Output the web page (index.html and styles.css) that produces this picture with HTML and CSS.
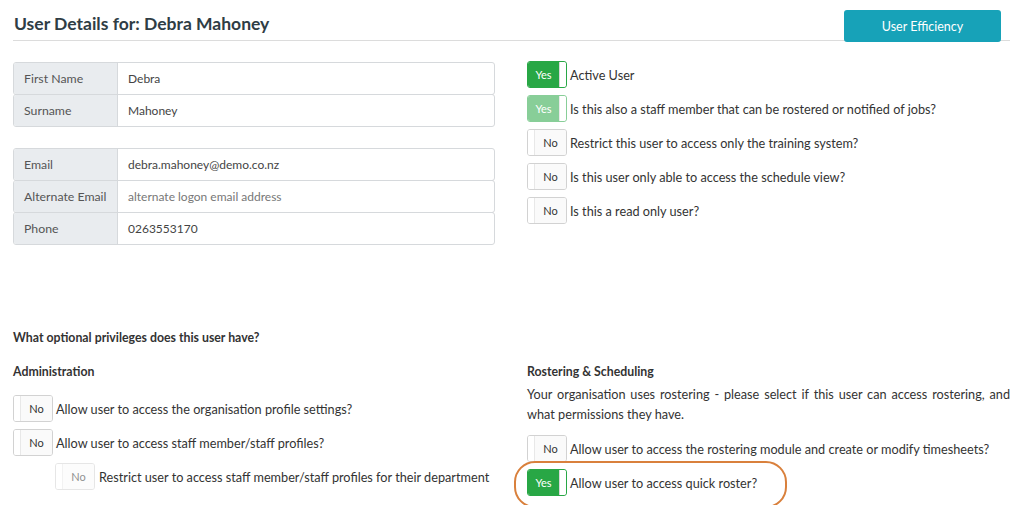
FILE: index.html
```html
<!DOCTYPE html>
<html>
<head>
<meta charset="utf-8">
<link rel="stylesheet" href="styles.css">
</head>
<body>
<div class="page">
  <div class="header">
    <h1 class="title">User Details for: Debra Mahoney</h1>
    <button class="btn-eff">User Efficiency</button>
  </div>

  <div class="top">
    <div class="col-left">
      <div class="group">
        <div class="row"><div class="lbl">First Name</div><div class="val">Debra</div></div>
        <div class="row"><div class="lbl">Surname</div><div class="val">Mahoney</div></div>
      </div>
      <div class="group g2">
        <div class="row"><div class="lbl">Email</div><div class="val">debra.mahoney@demo.co.nz</div></div>
        <div class="row"><div class="lbl">Alternate Email</div><div class="val ph">alternate logon email address</div></div>
        <div class="row"><div class="lbl">Phone</div><div class="val">0263553170</div></div>
      </div>
    </div>
    <div class="col-right">
      <div class="opt"><span class="tg yes"><span class="on">Yes</span><span class="knob"></span></span><span class="otxt">Active User</span></div>
      <div class="opt"><span class="tg yes dis"><span class="on">Yes</span><span class="knob"></span></span><span class="otxt">Is this also a staff member that can be rostered or notified of jobs?</span></div>
      <div class="opt"><span class="tg no"><span class="knob"></span><span class="off">No</span></span><span class="otxt">Restrict this user to access only the training system?</span></div>
      <div class="opt"><span class="tg no"><span class="knob"></span><span class="off">No</span></span><span class="otxt">Is this user only able to access the schedule view?</span></div>
      <div class="opt"><span class="tg no"><span class="knob"></span><span class="off">No</span></span><span class="otxt">Is this a read only user?</span></div>
    </div>
  </div>

  <div class="priv">What optional privileges does this user have?</div>

  <div class="bottom">
    <div class="col-left">
      <div class="sub">Administration</div>
      <div class="opts-admin">
        <div class="opt"><span class="tg no"><span class="knob"></span><span class="off">No</span></span><span class="otxt">Allow user to access the organisation profile settings?</span></div>
        <div class="opt"><span class="tg no"><span class="knob"></span><span class="off">No</span></span><span class="otxt">Allow user to access staff member/staff profiles?</span></div>
        <div class="opt indent"><span class="tg no dis"><span class="knob"></span><span class="off">No</span></span><span class="otxt">Restrict user to access staff member/staff profiles for their department</span></div>
      </div>
    </div>
    <div class="col-right">
      <div class="sub">Rostering &amp; Scheduling</div>
      <p class="desc">Your organisation uses rostering - please select if this user can access rostering, and what permissions they have.</p>
      <div class="opt"><span class="tg no"><span class="knob"></span><span class="off">No</span></span><span class="otxt">Allow user to access the rostering module and create or modify timesheets?</span></div>
      <div class="opt hl"><span class="tg yes"><span class="on">Yes</span><span class="knob"></span></span><span class="otxt">Allow user to access quick roster?</span></div>
    </div>
  </div>
</div>
</body>
</html>
```

FILE: styles.css
```css
* { box-sizing: border-box; }
html, body { margin: 0; padding: 0; background: #fff; }
body {
  font-family: Lato, "Open Sans", "Liberation Sans", sans-serif;
  font-size: 12.7px;
  color: #333;
  width: 1024px;
  height: 505px;
  overflow: hidden;
}
.page { padding: 0 14px 0 13px; }

.header {
  display: flex;
  justify-content: space-between;
  align-items: flex-end;
  height: 41px;
  border-bottom: 1px solid #dcdcdc;
}
.title {
  margin: 0 0 6px 1px;
  font-size: 17.5px;
  font-weight: bold;
  color: #2f3d45;
  line-height: 20px;
}
.btn-eff {
  width: 157px;
  height: 32px;
  margin: 0 9px -2px 0;
  border: none;
  border-radius: 3px;
  background: #17a2b8;
  color: #fff;
  font-family: inherit;
  font-size: 12.5px;
  position: relative;
}

.top { display: flex; gap: 32px; margin-top: 21px; }
.col-left { width: 482px; flex: none; }
.col-right { flex: 1; }

.group { display: flex; flex-direction: column; }
.g2 { margin-top: 21px; }
.row {
  display: flex;
  height: 33px;
  border: 1px solid #d6d9dc;
  border-radius: 3px;
  margin-top: -1px;
  overflow: hidden;
}
.row:first-child { margin-top: 0; }
.lbl {
  width: 104px;
  flex: none;
  background: #e9ecef;
  border-right: 1px solid #d6d9dc;
  padding: 0 0 0 10px;
  display: flex;
  align-items: center;
  color: #555;
  font-size: 12.3px;
  white-space: nowrap;
}
.val {
  flex: 1;
  padding: 0 10px;
  display: flex;
  align-items: center;
  color: #444;
  font-size: 12px;
}
.val.ph { color: #777; }

.col-right .opt { margin-bottom: 7px; }
.top .col-right { margin-top: -1px; }

.opt { display: flex; align-items: center; gap: 3px; height: 27px; }
.otxt { color: #333; white-space: nowrap; }

.tg {
  width: 40px;
  height: 27px;
  flex: none;
  display: flex;
  border: 1px solid #d2d2d2;
  border-radius: 3px;
  overflow: hidden;
  font-size: 11px;
}
.tg .on {
  flex: 1;
  background: #28a745;
  color: #fff;
  display: flex;
  align-items: center;
  justify-content: center;
}
.tg .knob { width: 7px; background: #fff; flex: none; }
.tg.yes { border-color: #28a745; }
.tg.yes .knob { border-left: 1px solid #d8d8d8; border-radius: 0 2px 2px 0; }
.tg.no .knob { border-right: 1px solid #e8e8e8; }
.tg .off {
  flex: 1;
  background: #fafafa;
  color: #333;
  display: flex;
  align-items: center;
  justify-content: center;
}
.tg.dis { opacity: 0.55; }

.priv {
  font-weight: bold;
  margin-top: 85px;
  line-height: 16px;
  font-size: 12.3px;
}
.bottom { display: flex; gap: 32px; margin-top: 18px; }
.sub { font-weight: bold; line-height: 16px; font-size: 12.3px; }
.opts-admin { margin-top: 15px; }
.opts-admin .opt { margin-bottom: 7px; }
.indent { margin-left: 42px; }
.indent .otxt { margin-left: 1px; }

.desc {
  margin: 4px 0 11px;
  line-height: 20px;
  text-align: justify;
  color: #333;
}
.bottom .col-right .opt { margin-bottom: 7px; }

.hl { position: relative; }
.hl::before {
  content: "";
  position: absolute;
  left: -13px;
  top: -8px;
  width: 269px;
  height: 43px;
  border: 2px solid #d9803c;
  border-radius: 21px;
}
```
